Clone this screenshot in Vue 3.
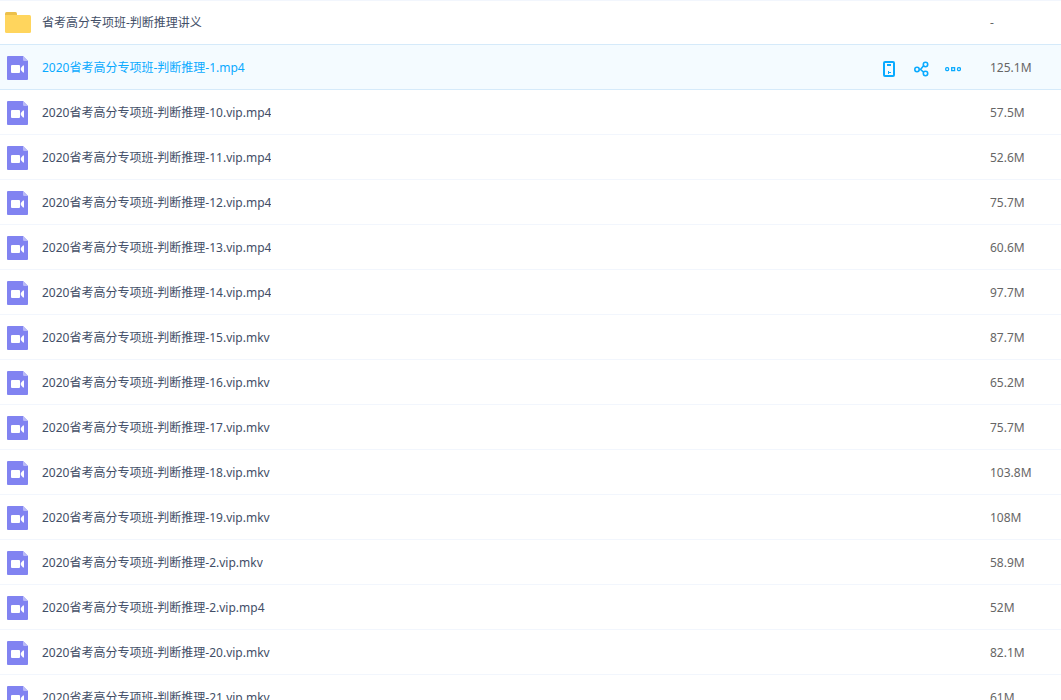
<script setup>
const course = '2020省考高分专项班-判断推理-'
const videos = [
  ['1.mp4', '125.1M'],
  ['10.vip.mp4', '57.5M'],
  ['11.vip.mp4', '52.6M'],
  ['12.vip.mp4', '75.7M'],
  ['13.vip.mp4', '60.6M'],
  ['14.vip.mp4', '97.7M'],
  ['15.vip.mkv', '87.7M'],
  ['16.vip.mkv', '65.2M'],
  ['17.vip.mkv', '75.7M'],
  ['18.vip.mkv', '103.8M'],
  ['19.vip.mkv', '108M'],
  ['2.vip.mkv', '58.9M'],
  ['2.vip.mp4', '52M'],
  ['20.vip.mkv', '82.1M'],
  ['21.vip.mkv', '61M'],
]
const files = [
  { name: '省考高分专项班-判断推理讲义', size: '-', folder: true },
  ...videos.map(([suffix, size], i) => ({ name: course + suffix, size, active: i === 0 })),
]
</script>

<template>
  <main class="viewport">
    <table class="files">
      <tbody>
        <tr v-for="file in files" :key="file.name" :class="{ active: file.active }">
          <td class="name-cell">
            <div class="entry">
              <svg v-if="file.folder" class="icon" width="26" height="24" viewBox="0 0 26 24" aria-hidden="true">
                <path d="M0 2.500Q0 1 1.500 1H10.500Q12 1 12 2.500V8H0Z" fill="#ecc04b" />
                <path d="M0 4H24.500Q26 4 26 5.500V20.500Q26 22 24.500 22H1.500Q0 22 0 20.500Z" fill="#ffd55d" />
              </svg>
              <svg v-else class="icon" width="26" height="24" viewBox="0 0 26 24" aria-hidden="true">
                <path d="M3 0H18L23 5V23Q23 24 22 24H3Q2 24 2 23V1Q2 0 3 0Z" fill="#8183f1" />
                <path d="M18 0L23 5H19.200Q18 5 18 3.800Z" fill="#b9baf7" />
                <rect x="6" y="9" width="9" height="8" rx="1" fill="#fff" />
                <path d="M15.800 12V14L18 16.500H19V9.500H18Z" fill="#fff" />
              </svg>
              <a class="name" href="#">{{ file.name }}</a>
            </div>
          </td>
          <td class="action-cell">
            <div v-if="file.active" class="actions">
              <button type="button" aria-label="保存到手机">
                <svg width="16" height="16" viewBox="0 0 16 16">
                  <rect x="3" y="1" width="10" height="14" rx="1" fill="none" stroke="#09aaff" stroke-width="2" />
                  <path d="M6 3H10V5H6ZM7 10H8V11H10V12H8V13H7Z" fill="#09aaff" />
                </svg>
              </button>
              <button type="button" aria-label="分享">
                <svg width="16" height="16" viewBox="0 0 16 16" fill="none" stroke="#09aaff" stroke-width="1.600">
                  <circle cx="4" cy="8.500" r="2.200" />
                  <circle cx="12.500" cy="3.500" r="2.200" />
                  <circle cx="12.500" cy="12.500" r="2.200" />
                  <path d="M6.200 8.500H7.500L10.600 4.800M7.500 8.500L10.600 11.200" />
                </svg>
              </button>
              <button type="button" aria-label="更多">
                <svg width="16" height="16" viewBox="0 0 16 16" fill="none" stroke="#09aaff" stroke-width="1.300">
                  <rect x="0.700" y="6.700" width="2.900" height="2.900" rx="1" />
                  <rect x="6.700" y="6.700" width="2.900" height="2.900" />
                  <rect x="12.500" y="6.700" width="2.900" height="2.900" rx="1" />
                </svg>
              </button>
            </div>
          </td>
          <td class="size-cell">{{ file.size }}</td>
        </tr>
      </tbody>
    </table>
  </main>
</template>

<style>
body {
  margin: 0;
  background: #fff;
}
</style>

<style scoped>
.viewport {
  height: 100vh;
  overflow: hidden;
  font-family: "Noto Sans", "Noto Sans CJK SC", sans-serif;
  font-size: 12px;
  line-height: 18px;
  color: #424e67;
}
.files {
  width: 100%;
  border-spacing: 0;
  table-layout: fixed;
  box-shadow: inset 0 1px #f2f6fd;
}
td {
  box-sizing: border-box;
  height: 45px;
  padding: 2px 0 0;
  border-bottom: 1px solid #f2f6fd;
  vertical-align: middle;
}
tr:first-child td,
.active td {
  border-color: #d5eafa;
}
.active td {
  background: #f4fbff;
}
.entry {
  display: flex;
  align-items: center;
  gap: 11px;
  padding-left: 5px;
}
.icon {
  flex: none;
}
.name {
  overflow: hidden;
  color: inherit;
  text-decoration: none;
  text-overflow: ellipsis;
  white-space: nowrap;
}
.active .name {
  color: #09aaff;
}
.action-cell {
  width: 109px;
}
.actions {
  display: flex;
  gap: 16px;
  padding-top: 1px;
}
button {
  display: flex;
  padding: 0;
  border: 0;
  background: none;
  cursor: pointer;
}
.size-cell {
  width: 71px;
  color: #666;
}
</style>
